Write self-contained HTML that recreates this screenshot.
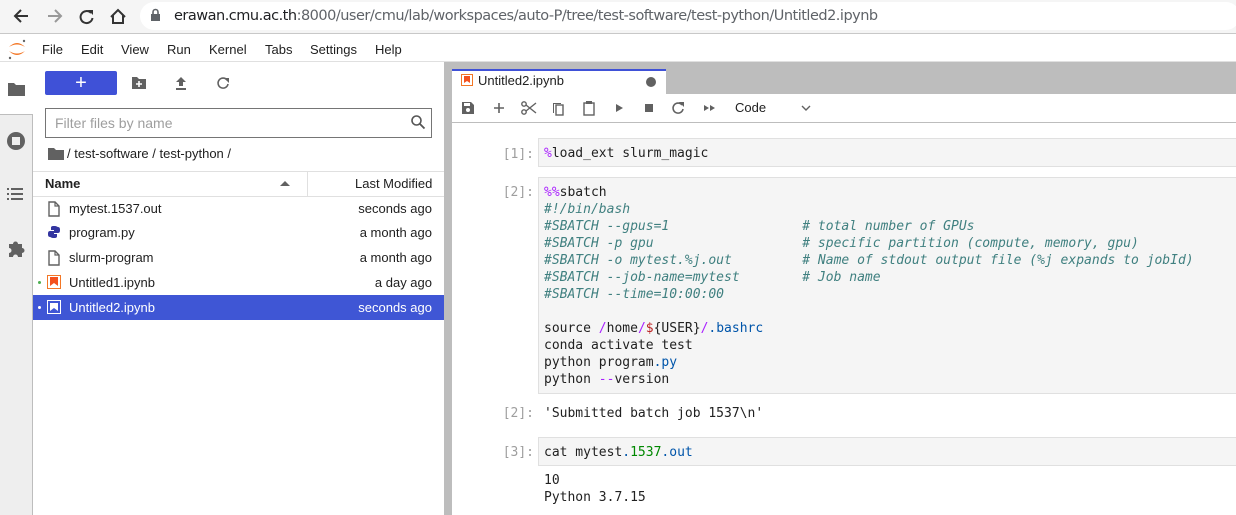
<!DOCTYPE html>
<html><head><meta charset="utf-8"><style>
*{margin:0;padding:0;box-sizing:border-box}
body{width:1236px;height:515px;overflow:hidden;background:#fff;font-family:"Liberation Sans",sans-serif;position:relative;color:#212121}
.abs{position:absolute}
.mono{font-family:"DejaVu Sans Mono",monospace;font-size:13px;line-height:17px;white-space:pre}
.cm{color:#408080;font-style:italic}
.mg{color:#aa22ff}
.num{color:#080}
.bl{color:#0055aa}
.prompt{color:#9e9e9e;text-align:right;width:80px}
.row{position:absolute;left:33px;width:411px;height:25px;font-size:13px;line-height:25px}
.row .n{position:absolute;left:36px}
.row .d{position:absolute;right:12px}
</style></head><body>
<!-- browser bar -->
<div class="abs" style="left:0;top:0;width:1236px;height:34px;background:#f5f5f5;border-bottom:1px solid #c8c8c8"></div>
<div class="abs" style="left:140px;top:2px;width:1100px;height:28px;background:#fff;border-radius:14px"></div>
<svg class="abs" style="left:0;top:6px" width="140" height="20" viewBox="0 0 140 20">
<path d="M28 10H16M21 4l-6 6 6 6" stroke="#333" stroke-width="2" fill="none"/>
<path d="M48 10h12M55 4l6 6-6 6" stroke="#999" stroke-width="2" fill="none"/>
<path d="M91 7a6 6 0 1 0 1.5 5" stroke="#333" stroke-width="2" fill="none"/><path d="M88 4h5v5z" fill="#333"/>
<path d="M111 11l7-7 7 7M113 9v8h10V9" stroke="#333" stroke-width="2" fill="none"/>
</svg>
<svg class="abs" style="left:150px;top:8px" width="12" height="14"><rect x="1" y="6" width="9" height="7" fill="#5f6368"/><path d="M3 6V4a2.5 2.5 0 0 1 5 0v2" stroke="#5f6368" stroke-width="1.6" fill="none"/></svg>
<div class="abs" style="left:174px;top:8px;color:#202124;font-family:'DejaVu Sans',sans-serif;letter-spacing:-0.5px;font-size:14.5px">erawan.cmu.ac.th<span style="color:#5f6368">:8000/user/cmu/lab/workspaces/auto-P/tree/test-software/test-python/Untitled2.ipynb</span></div>
<!-- menubar -->
<div class="abs" style="left:0;top:35px;width:1236px;height:27px;background:#fff;border-bottom:1px solid #e0e0e0"></div>
<svg class="abs" style="left:6px;top:38px" width="22" height="22"><path d="M3 9Q11 1 19 9Q11 4 3 9z" fill="#f37726"/><path d="M3 13Q11 21 19 13Q11 18 3 13z" fill="#f37726"/><circle cx="18" cy="3" r="1.2" fill="#666"/><circle cx="4" cy="20" r="1.2" fill="#666"/></svg>
<div class="abs" style="left:42px;top:42px;font-size:13px;word-spacing:0">
<span style="position:absolute;left:0">File</span><span style="position:absolute;left:39px">Edit</span><span style="position:absolute;left:79px">View</span><span style="position:absolute;left:125px">Run</span><span style="position:absolute;left:167px">Kernel</span><span style="position:absolute;left:223px">Tabs</span><span style="position:absolute;left:268px">Settings</span><span style="position:absolute;left:333px">Help</span></div>
<!-- left sidebar -->
<div class="abs" style="left:0;top:62px;width:33px;height:453px;background:#eee;border-right:1px solid #bdbdbd"></div>
<div class="abs" style="left:0;top:62px;width:33px;height:53px;background:#fff;border-bottom:1px solid #bdbdbd"></div>
<svg class="abs" style="left:7px;top:80px" width="20" height="18"><path d="M1 3h6l2 2h9v11H1z" fill="#616161"/></svg>
<svg class="abs" style="left:6px;top:131px" width="20" height="20"><circle cx="10" cy="10" r="9" fill="#616161"/><rect x="6" y="6" width="8" height="8" fill="#eee"/></svg>
<svg class="abs" style="left:7px;top:186px" width="18" height="16" fill="#616161"><rect x="0" y="2" width="2" height="2"/><rect x="4" y="2" width="12" height="2"/><rect x="0" y="7" width="2" height="2"/><rect x="4" y="7" width="12" height="2"/><rect x="0" y="12" width="2" height="2"/><rect x="4" y="12" width="12" height="2"/></svg>
<svg class="abs" style="left:7px;top:238px" width="20" height="20"><path d="M2 6h4a2.5 2.5 0 1 1 5 0h4v4a2.5 2.5 0 1 1 0 5v4H11a2.5 2.5 0 1 0-5 0H2v-4a2.5 2.5 0 1 0 0-5z" fill="#616161"/></svg>
<!-- file browser -->
<div class="abs" style="left:45px;top:71px;width:72px;height:24px;background:#3f51d7;border-radius:2px;color:#fff;font-size:20px;text-align:center;line-height:24px">+</div>
<svg class="abs" style="left:131px;top:76px" width="16" height="14"><path d="M1 1h5l2 2h7v10H1z" fill="#616161"/><path d="M8 5v6M5 8h6" stroke="#fff" stroke-width="1.6"/></svg>
<svg class="abs" style="left:174px;top:76px" width="14" height="14"><path d="M7 1l5 5H9v4H5V6H2z M2 12h10v2H2z" fill="#616161"/></svg>
<svg class="abs" style="left:216px;top:76px" width="14" height="14"><path d="M11 4a5 5 0 1 0 1 4" stroke="#616161" stroke-width="1.6" fill="none"/><path d="M8 2h5v5z" fill="#616161"/></svg>
<div class="abs" style="left:45px;top:108px;width:387px;height:30px;border:1px solid #757575;background:#fff"></div>
<div class="abs" style="left:55px;top:115px;font-size:14px;color:#9e9e9e">Filter files by name</div>
<svg class="abs" style="left:410px;top:114px" width="16" height="16"><circle cx="6.5" cy="6.5" r="4.5" stroke="#555" stroke-width="1.6" fill="none"/><path d="M10 10l4.5 4.5" stroke="#555" stroke-width="1.8"/></svg>
<svg class="abs" style="left:48px;top:146px" width="16" height="14"><path d="M0 2h6l2 2h8v10H0z" fill="#616161"/></svg>
<div class="abs" style="left:67px;top:146px;font-size:13px">/ test-software / test-python /</div>
<div class="abs" style="left:33px;top:171px;width:411px;height:26px;border-top:1px solid #e0e0e0;border-bottom:1px solid #e0e0e0"></div>
<div class="abs" style="left:307px;top:172px;width:1px;height:24px;background:#e0e0e0"></div>
<div class="abs" style="left:45px;top:176px;font-size:13px;font-weight:bold">Name</div>
<svg class="abs" style="left:280px;top:180px" width="10" height="6"><path d="M0 6l5-5 5 5z" fill="#616161"/></svg>
<div class="abs" style="left:355px;top:176px;font-size:13px">Last Modified</div>
<div class="row" style="top:196px"><svg class="abs" style="left:14px;top:5px" width="14" height="16"><path d="M2 1h6l4 4v10H2z" stroke="#616161" stroke-width="1.4" fill="none"/><path d="M8 1v4h4" stroke="#616161" stroke-width="1.2" fill="none"/></svg><span class="n">mytest.1537.out</span><span class="d">seconds ago</span></div>
<div class="row" style="top:220px"><svg class="abs" style="left:14px;top:5px" width="14" height="14"><path d="M7 1c-3 0-3 1-3 2v2h3v1H3c-2 0-2 2-2 3s0 3 2 3h1V9c0-1 1-2 2-2h3c1 0 2-1 2-2V3c0-1-1-2-4-2z" fill="#3335a0"/><path d="M7 13c3 0 3-1 3-2V9H7V8h4c2 0 2-2 2-3s0-3-2-3h-1v3c0 1-1 2-2 2H5c-1 0-2 1-2 2v2c0 1 1 2 4 2z" fill="#3335a0"/></svg><span class="n">program.py</span><span class="d">a month ago</span></div>
<div class="row" style="top:245px"><svg class="abs" style="left:14px;top:5px" width="14" height="16"><path d="M2 1h6l4 4v10H2z" stroke="#616161" stroke-width="1.4" fill="none"/><path d="M8 1v4h4" stroke="#616161" stroke-width="1.2" fill="none"/></svg><span class="n">slurm-program</span><span class="d">a month ago</span></div>
<div class="row" style="top:270px"><div class="abs" style="left:5px;top:11px;width:3px;height:3px;background:#4caf50;border-radius:50%"></div><svg class="abs" style="left:14px;top:5px" width="14" height="14"><rect x="0.5" y="0.5" width="13" height="13" fill="#fff" stroke="#f37726"/><path d="M3 2h8v9l-4-3-4 3z" fill="#f4511e"/></svg><span class="n">Untitled1.ipynb</span><span class="d">a day ago</span></div>
<div class="row" style="top:295px;background:#3f56d5;color:#fff"><div class="abs" style="left:5px;top:11px;width:3px;height:3px;background:#fff;border-radius:50%"></div><svg class="abs" style="left:14px;top:5px" width="14" height="14"><rect x="0.5" y="0.5" width="13" height="13" fill="none" stroke="#fff"/><path d="M3 3h8v8l-4-3-4 3z" fill="#fff"/></svg><span class="n">Untitled2.ipynb</span><span class="d">seconds ago</span></div>
<!-- splitter -->
<div class="abs" style="left:444px;top:62px;width:8px;height:453px;background:#bdbdbd"></div>
<!-- tab bar -->
<div class="abs" style="left:452px;top:62px;width:784px;height:32px;background:#bdbdbd"></div>
<div class="abs" style="left:452px;top:69px;width:214px;height:26px;background:#fff;border-top:2px solid #3f51d7"></div>
<svg class="abs" style="left:461px;top:74px" width="12" height="12"><rect x="0.5" y="0.5" width="11" height="11" fill="#fff" stroke="#f37726"/><path d="M3 2h6v7l-3-2-3 2z" fill="#f4511e"/></svg>
<div class="abs" style="left:478px;top:73px;font-size:13px">Untitled2.ipynb</div>
<div class="abs" style="left:646px;top:77px;width:10px;height:10px;border-radius:50%;background:#616161"></div>
<!-- toolbar -->
<div class="abs" style="left:452px;top:94px;width:784px;height:29px;background:#fff;border-bottom:1px solid #bdbdbd"></div>
<svg class="abs" style="left:460px;top:100px" width="360" height="16" fill="#616161">
<path d="M2 2h9l3 3v9H2z"/><rect x="4" y="3" width="6" height="3" fill="#fff"/><circle cx="8" cy="10" r="2" fill="#fff"/>
<path d="M39 3v10M34 8h10" stroke="#616161" stroke-width="1.6"/>
<circle cx="64" cy="12" r="2.2" fill="none" stroke="#616161" stroke-width="1.4"/><circle cx="64" cy="4" r="2.2" fill="none" stroke="#616161" stroke-width="1.4"/><path d="M66 5l10 8M66 11l10-8" stroke="#616161" stroke-width="1.4"/>
<path d="M94 3h7v1h-7v9h-1V3z"/><rect x="96" y="5" width="7" height="10" fill="none" stroke="#616161" stroke-width="1.4"/>
<rect x="124" y="3" width="10" height="12" fill="none" stroke="#616161" stroke-width="1.4"/><rect x="126" y="1" width="6" height="3"/>
<path d="M156 4l7 4-7 4z"/>
<rect x="185" y="4" width="8" height="8"/>
<path d="M222 5a5 5 0 1 0 1 4" stroke="#616161" stroke-width="1.6" fill="none"/><path d="M219 2h5v5z"/>
<path d="M244 5l5 3-5 3zM250 5l5 3-5 3z"/>
<path d="M342 6l4 4 4-4" stroke="#616161" stroke-width="1.4" fill="none"/>
</svg>
<div class="abs" style="left:735px;top:100px;font-size:13px">Code</div>
<!-- cells -->
<div class="abs mono prompt" style="left:452px;top:146px;width:82px">[1]:</div>
<div class="abs" style="left:538px;top:138px;width:710px;height:29px;background:#f5f5f5;border:1px solid #e0e0e0"></div>
<div class="abs mono" style="left:544px;top:145px"><span class="mg">%</span>load_ext slurm_magic</div>
<div class="abs mono prompt" style="left:452px;top:184px;width:82px">[2]:</div>
<div class="abs" style="left:538px;top:177px;width:710px;height:217px;background:#f5f5f5;border:1px solid #e0e0e0"></div>
<div class="abs mono" style="left:544px;top:184px"><span class="mg">%%</span>sbatch
<span class="cm">#!/bin/bash</span>
<span class="cm">#SBATCH --gpus=1                 # total number of GPUs</span>
<span class="cm">#SBATCH -p gpu                   # specific partition (compute, memory, gpu)</span>
<span class="cm">#SBATCH -o mytest.%j.out         # Name of stdout output file (%j expands to jobId)</span>
<span class="cm">#SBATCH --job-name=mytest        # Job name</span>
<span class="cm">#SBATCH --time=10:00:00</span>

source <span class="mg">/</span>home<span class="mg">/</span><span style="color:#b22">$</span>{USER}<span class="mg">/</span><span class="bl">.bashrc</span>
conda activate test
python program<span class="bl">.py</span>
python <span class="mg">--</span>version</div>
<div class="abs mono prompt" style="left:452px;top:405px;width:82px">[2]:</div>
<div class="abs mono" style="left:544px;top:405px">'Submitted batch job 1537\n'</div>
<div class="abs mono prompt" style="left:452px;top:444px;width:82px">[3]:</div>
<div class="abs" style="left:538px;top:437px;width:710px;height:29px;background:#f5f5f5;border:1px solid #e0e0e0"></div>
<div class="abs mono" style="left:544px;top:444px">cat mytest<span class="bl">.</span><span class="num">1537</span><span class="bl">.out</span></div>
<div class="abs mono" style="left:544px;top:472px">10
Python 3.7.15</div>
</body></html>
